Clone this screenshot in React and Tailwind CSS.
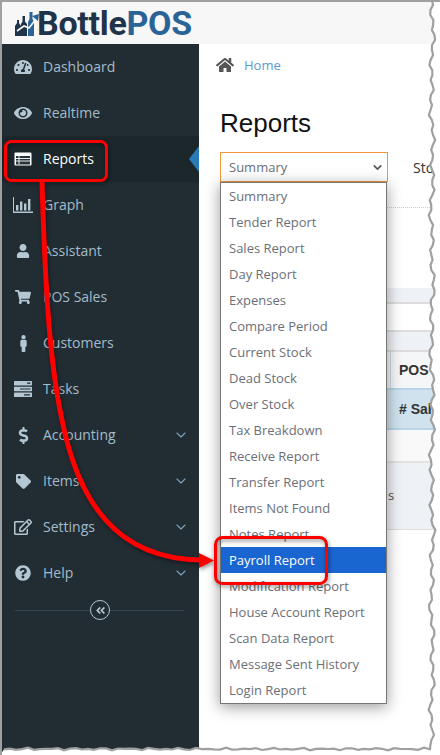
import React from "react";
import {
  FaTachometerAlt, FaEye, FaUser, FaShoppingCart, FaMale, FaDollarSign, FaTag,
  FaQuestionCircle, FaHome, FaAngleDoubleLeft, FaRegEdit,
} from "react-icons/fa";
import { ChevronDown } from "lucide-react";

function ReportsIcon() {
  return (
    <svg width="18" height="14" viewBox="0 0 18 14">
      <rect x="0.5" y="0.5" width="17" height="13" rx="1" fill="#fff" />
      <rect x="2" y="4" width="14" height="8.5" fill="#26343b" />
      <path d="M2 6.5h14M2 9h14M5 4v8.5" stroke="#fff" strokeWidth="0.9" />
    </svg>
  );
}

function GraphIcon() {
  return (
    <svg width="20" height="16" viewBox="0 0 20 16" fill="#b4c7d2">
      <path d="M0 0h1v14.5h19V16H0z" />
      <rect x="3" y="8" width="2.4" height="5.5" />
      <rect x="7" y="4.5" width="2.4" height="9" />
      <rect x="11" y="6.5" width="2.4" height="7" />
      <rect x="15" y="2" width="2.4" height="11.5" />
    </svg>
  );
}

function TasksIcon() {
  return (
    <svg width="18" height="16" viewBox="0 0 18 16" fill="#b4c7d2">
      <rect x="0" y="0" width="18" height="4.4" rx="0.6" />
      <rect x="0" y="5.800" width="18" height="4.400" rx="0.6" />
      <rect x="0" y="11.600" width="18" height="4.400" rx="0.6" />
      <path d="M13 2.200h3.500M6 8h10.500M10 13.800h6" stroke="#222d33" strokeWidth="1.200" />
    </svg>
  );
}

const NAV = [
  { label: "Dashboard", icon: <FaTachometerAlt size={18} /> },
  { label: "Realtime", icon: <FaEye size={18} /> },
  { label: "Reports", icon: <ReportsIcon />, active: true },
  { label: "Graph", icon: <GraphIcon /> },
  { label: "Assistant", icon: <FaUser size={14} /> },
  { label: "POS Sales", icon: <FaShoppingCart size={16} /> },
  { label: "Customers", icon: <FaMale size={17} /> },
  { label: "Tasks", icon: <TasksIcon /> },
  { label: "Accounting", icon: <FaDollarSign size={17} />, more: true },
  { label: "Items", icon: <FaTag size={15} />, more: true },
  { label: "Settings", icon: <FaRegEdit size={18} />, more: true },
  { label: "Help", icon: <FaQuestionCircle size={16} />, more: true },
];

const REPORTS = [
  "Summary", "Tender Report", "Sales Report", "Day Report", "Expenses", "Compare Period",
  "Current Stock", "Dead Stock", "Over Stock", "Tax Breakdown", "Receive Report",
  "Transfer Report", "Items Not Found", "Notes Report", "Payroll Report",
  "Modification Report", "House Account Report", "Scan Data Report",
  "Message Sent History", "Login Report",
];

// torn screenshot edge, right and bottom side
function tornPoints() {
  const pts = [];
  for (let y = 0; y <= 748; y += 5) {
    const d = Math.sin(y * 0.37) * 1.6 + Math.sin(y * 1.13) * 1.2 + Math.sin(y * 0.05) * 0.8;
    pts.push([432 + d, y]);
  }
  for (let x = 430; x >= 0; x -= 6) {
    const d = Math.sin(x * 0.41) * 0.8 + Math.sin(x * 1.3) * 0.6;
    pts.push([x, 749 + d]);
  }
  return pts.map((p) => p[0].toFixed(1) + "," + p[1].toFixed(1)).join(" ");
}

function TornEdge() {
  const pts = tornPoints();
  return (
    <svg className="absolute inset-0 pointer-events-none" width="440" height="755" viewBox="0 0 440 755">
      <polygon points={`${pts} 0,755 440,755 440,0`} fill="#fff" />
      <polyline points={pts} fill="none" stroke="#a0a0a0" strokeWidth="2.2" />
    </svg>
  );
}

function Logo() {
  return (
    <div className="flex items-center pl-[13px] h-full">
      <svg width="26" height="26" viewBox="0 0 26 26" className="mt-[2px] mr-[-4px] shrink-0">
        <path d="M0 25v-10l2-3V9h2v3l2 3v-2l1.500-2.500V5h2.500v5.500L12 13v12z" fill="#1f3349" />
        <path d="M13 25V11l1.500-3V1h3v7l1.500 3v14z" fill="#2a6496" />
        <path d="M2 20l7-5 5 2 7-9" fill="none" stroke="#f7f7f7" strokeWidth="1.600" />
        <path d="M17 5l7-2-1 7z" fill="#2a6496" />
      </svg>
      <span className="font-['Roboto',sans-serif] font-bold text-[34px] leading-none tracking-[-0.3px] text-[#1f3349]">
        Bottle<span className="text-[#2a6496]">POS</span>
      </span>
    </div>
  );
}

function Sidebar() {
  return (
    <aside className="relative w-[197px] h-full shrink-0 bg-[#222d33] font-['Open_Sans',sans-serif] text-[14px]">
      {NAV.map((item) => (
        <div
          key={item.label}
          className={`relative flex items-center h-[46px] ${item.active ? "bg-[#1c272c] text-white" : "text-[#a3bccb]"}`}
        >
          <span className={`flex justify-center w-[41px] pl-[1px] shrink-0 ${item.active ? "text-white" : "text-[#b4c7d2]"}`}>
            {item.icon}
          </span>
          <span className="pb-[2px]">{item.label}</span>
          {item.more && <ChevronDown size={16} strokeWidth={1.6} className="ml-auto mr-[10px] text-[#7ea5bc]" />}
          {item.active && (
            <span className="absolute right-0 top-1/2 -translate-y-1/2 w-0 h-0 border-y-[13px] border-y-transparent border-r-[10px] border-r-[#2a7ab8]" />
          )}
          {item.active && <span className="absolute -right-[2px] top-0 w-[2px] h-full bg-[#2a7ab8]" />}
        </div>
      ))}
      <div className="relative mt-[14px] ml-[13px] mr-[15px] h-px bg-[#37454d]">
        <span className="absolute left-[75px] -top-[10px] flex items-center justify-center w-[20px] h-[20px] rounded-full border border-[#b4c7d2] bg-[#222d33] text-[#b4c7d2]">
          <FaAngleDoubleLeft size={11} />
        </span>
      </div>
    </aside>
  );
}

function ReportDropdown() {
  return (
    <div className="absolute left-[21px] top-[138px] w-[167px] bg-white border border-[#767676] shadow-[0_3px_14px_rgba(0,0,0,0.4)] font-['Open_Sans',sans-serif] text-[13px] text-[#6b6f78] z-10">
      {REPORTS.map((name) => (
        <div
          key={name}
          className={`h-[26px] leading-[26px] pl-[8px] whitespace-nowrap ${name === "Payroll Report" ? "bg-[#1a66d1] text-white" : ""}`}
        >
          {name}
        </div>
      ))}
    </div>
  );
}

function Main() {
  return (
    <main className="relative flex-1 h-full bg-white pl-[21px] overflow-hidden">
      <div className="flex items-center h-[42px] -ml-[4px] font-['Open_Sans',sans-serif] text-[13px] text-[#5b9bd5]">
        <FaHome size={18} className="text-[#555] mr-[10px]" />
        <span className="pt-[2px]">Home</span>
      </div>
      <h1 className="mt-[22px] h-[30px] leading-[30px] font-['Liberation_Sans',sans-serif] text-[26px] text-[#111]">Reports</h1>
      <div className="flex items-center mt-[14px] font-['Open_Sans',sans-serif] text-[13px] text-[#6b6f78]">
        <div className="flex items-center justify-between w-[168px] h-[30px] pl-[8px] pr-[3px] border border-[#f0983c] bg-white">
          <span className="pt-[2px]">Summary</span>
          <ChevronDown size={13} strokeWidth={3} className="text-[#555]" />
        </div>
        <span className="ml-[25px] text-[14px] text-[#333]">Sto</span>
      </div>
      <div className="mt-[25px] border-t border-dotted border-[#ccc]" />
      <div className="mt-[80px] h-[14px] bg-[#eef1f5]" />
      <div className="h-[30px] bg-white border-y-2 border-[#ddd]" />
      <div className="h-[18px] bg-[#eef1f5]" />
      <div className="grid grid-cols-[170px_1fr] font-['Liberation_Sans',sans-serif] font-bold text-[14px] text-[#333]">
        <div className="h-[38px] bg-[#f5f6f8] border-t-2 border-[#ddd]" />
        <div className="flex items-center h-[38px] pl-[8px] bg-[#f5f6f8] border-t-2 border-l border-t-[#ddd] border-l-[#cfdfe8] whitespace-nowrap">POS</div>
        <div className="h-[42px] bg-[#cfe2ee] border-y-2 border-[#b8d4e6]" />
        <div className="flex items-center h-[42px] pl-[9px] bg-[#cfe2ee] border-y-2 border-[#b8d4e6] whitespace-nowrap"># Sal</div>
      </div>
      <div className="h-[33px] bg-[#f9f9f9] border-b-2 border-[#e2e2e2]" />
      <div className="flex items-center h-[67px] pl-[168px] bg-[#eef1f5] border-b border-[#ddd] font-['Open_Sans',sans-serif] text-[13px] text-[#555]">
        <span>s</span>
      </div>
      <ReportDropdown />
    </main>
  );
}

// red callouts drawn on top of the screenshot
function Callouts() {
  return (
    <svg
      className="absolute inset-0 pointer-events-none z-20 drop-shadow-[1px_2px_2px_rgba(0,0,0,0.45)]"
      width="440"
      height="755"
      viewBox="0 0 440 755"
      fill="none"
    >
      <rect x="5.500" y="141.500" width="101" height="39" rx="6" stroke="#ff0000" strokeWidth="3" />
      <rect x="215.500" y="537.500" width="111" height="46" rx="7" stroke="#ff0000" strokeWidth="3" />
      <path d="M42 182C45 280 49 360 62 420C78 500 115 559 201 560" stroke="#ff0000" strokeWidth="5" />
      <polygon points="199,553 214,560.500 199,568" fill="#ff0000" />
    </svg>
  );
}

export default function App() {
  return (
    <div className="relative w-[440px] h-[755px] overflow-hidden bg-white border-t-2 border-l-2 border-[#a0a0a0] box-border">
      <header className="h-[42px] bg-[#f7f7f7]">
        <Logo />
      </header>
      <div className="flex h-[711px]">
        <Sidebar />
        <Main />
      </div>
      <div className="absolute -left-[2px] -top-[2px] w-[440px] h-[755px] pointer-events-none">
        <TornEdge />
        <Callouts />
      </div>
    </div>
  );
}
